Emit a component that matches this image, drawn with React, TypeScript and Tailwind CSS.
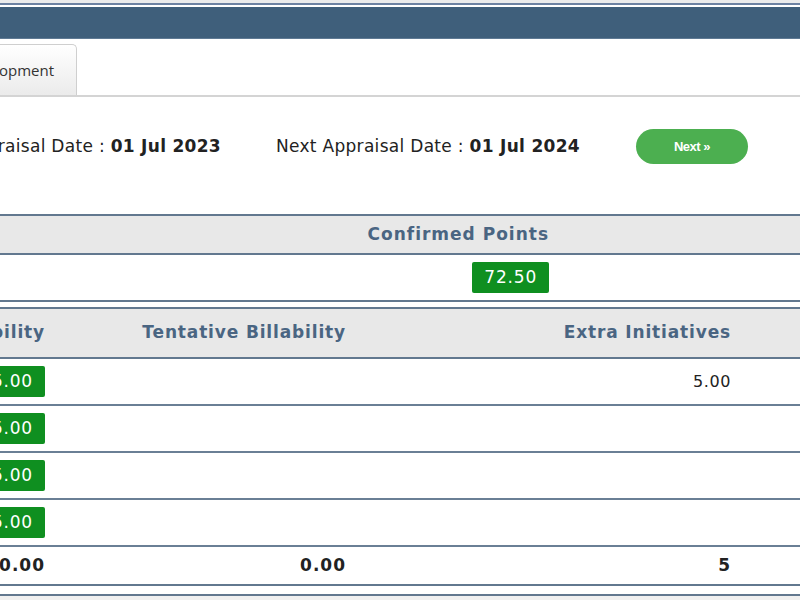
import { Fragment } from 'react'

const font = { fontFamily: '"DejaVu Sans", Verdana, sans-serif' }

const rows = [
  { billability: '5.00', tentative: '', extra: '5.00' },
  { billability: '5.00', tentative: '', extra: '' },
  { billability: '5.00', tentative: '', extra: '' },
  { billability: '5.00', tentative: '', extra: '' },
]

function Badge({ value }: { value: string }) {
  return (
    <span className="inline-block rounded-[2px] bg-[#0f8f20] px-[12px] py-[4px] text-[17px] leading-[23px] tracking-[0.8px] text-white">
      {value}
    </span>
  )
}

export default function App() {
  return (
    <div className="h-[600px] w-[800px] overflow-hidden bg-white text-[#222]" style={font}>
      {/* header band */}
      <div className="h-[3px] bg-[#ebebeb]" />
      <div className="h-[2px] bg-[#6d82a2]" />
      <div className="h-[2px] bg-white" />
      <div className="h-[31px] bg-[#3f5f7b]" />
      <div className="h-[1px] bg-[#5f7a94]" />

      <div className="-ml-[200px] w-[1100px]">
        {/* tabs */}
        <div className="flex h-[58px] items-end border-b-2 border-[#d4d4d4]">
          <div
            className="flex h-[51px] w-[277px] items-center justify-end rounded-tr-[5px] border border-b-0 border-[#cfcfcf] bg-gradient-to-b from-white to-[#ebebeb] pr-[22px] text-[15px] text-[#333]"
            style={{ fontFamily: '"Open Sans", sans-serif' }}
          >
            Personal Development
          </div>
        </div>

        {/* appraisal dates */}
        <div className="h-[117px] pt-[32px]">
          <div className="flex h-[35px] items-center text-[17px] tracking-[0.3px]">
            <div className="w-[421px] whitespace-nowrap text-right">
              Last Appraisal Date : <span className="font-bold">01 Jul 2023</span>
            </div>
            <div className="ml-[55px] whitespace-nowrap">
              Next Appraisal Date : <span className="font-bold">01 Jul 2024</span>
            </div>
            <button
              className="ml-[56px] h-[35px] w-[112px] rounded-full bg-[#4caf50] text-[13px] font-bold tracking-[-0.5px] text-white"
              style={{ fontFamily: '"Liberation Sans", Arial, sans-serif' }}
            >
              Next »
            </button>
          </div>
        </div>

        {/* points table */}
        <div className="border-y-2 border-[#62788f]">
          <div className="grid h-[39px] grid-cols-[761px_1fr] items-center border-b-2 border-[#62788f] bg-[#e8e8e8] text-[17px] font-bold tracking-[1px] text-[#4a6582]">
            <div className="pr-[12px] text-right">Confirmed Points</div>
            <div />
          </div>
          <div className="grid h-[45px] grid-cols-[761px_1fr] items-center">
            <div className="pr-[12px] text-right">
              <Badge value="72.50" />
            </div>
            <div />
          </div>
        </div>

        <div className="h-[5px]" />

        {/* billability table */}
        <div className="border-t-2 border-[#62788f]">
          <div className="grid h-[50px] grid-cols-[257px_301px_385px_1fr] items-center border-b-2 border-[#62788f] bg-[#e8e8e8] text-[17px] font-bold tracking-[0.85px] text-[#4a6582]">
            <div className="pr-[12px] text-right">Billability</div>
            <div className="pr-[12px] text-right">Tentative Billability</div>
            <div className="pr-[12px] text-right">Extra Initiatives</div>
            <div />
          </div>
          {rows.map((row, i) => (
            <div
              key={i}
              className="grid h-[47px] grid-cols-[257px_301px_385px_1fr] items-center border-b-2 border-[#6a7f95] text-[16px] tracking-[0.6px]"
            >
              <div className="pr-[12px] text-right">
                <Badge value={row.billability} />
              </div>
              <div className="pr-[12px] text-right">{row.tentative}</div>
              <div className="pr-[12px] text-right">{row.extra}</div>
              <div />
            </div>
          ))}
          <div className="grid h-[39px] grid-cols-[257px_301px_385px_1fr] items-center border-b-2 border-[#62788f] text-[17px] font-bold tracking-[1px]">
            {['20.00', '0.00', '5'].map((v) => (
              <Fragment key={v}>
                <div className="pr-[12px] text-right">{v}</div>
              </Fragment>
            ))}
            <div />
          </div>
          <div className="h-[8px]" />
          <div className="h-[2px] bg-[#62788f]" />
          <div className="h-[20px] bg-[#f0f0f0]" />
        </div>
      </div>
    </div>
  )
}
